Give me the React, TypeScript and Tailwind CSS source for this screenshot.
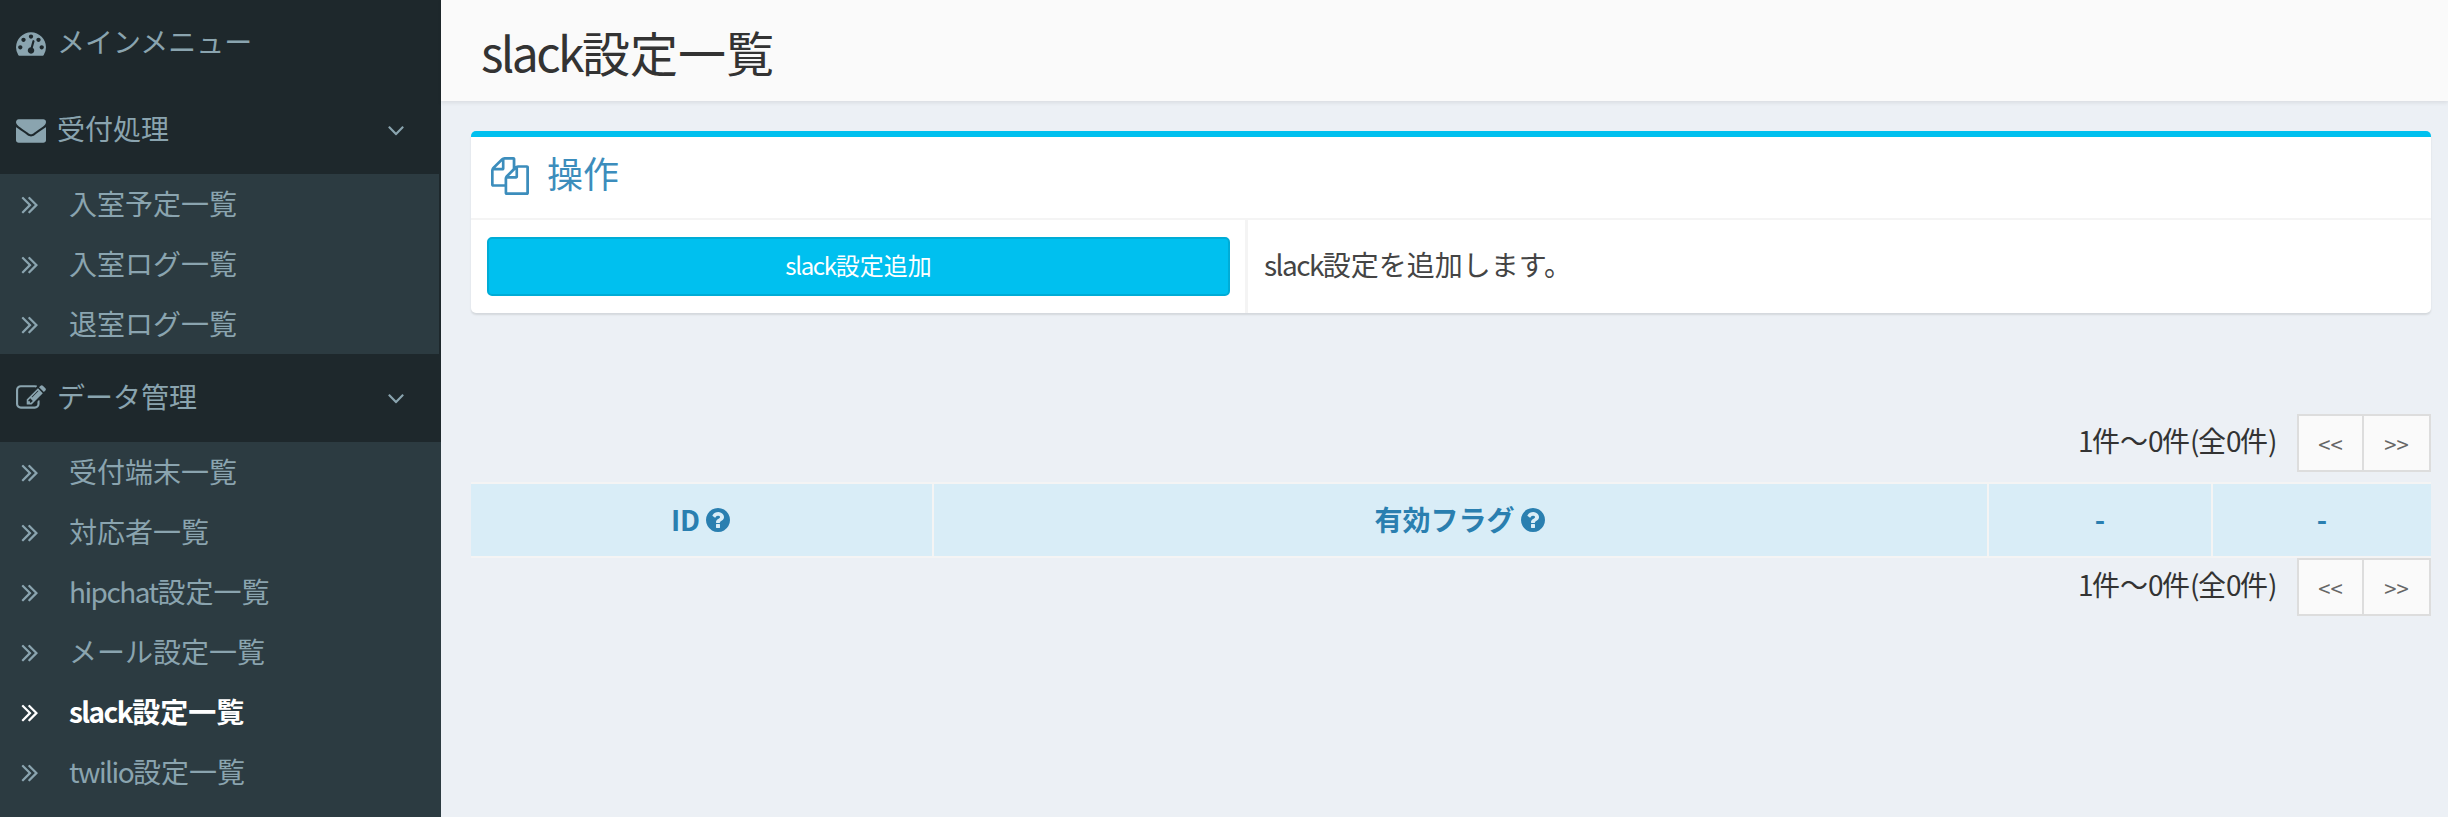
import React from 'react';

const FA = {
  tachometer: "M384 1152q0-53-37.5-90.5t-90.5-37.5-90.5 37.5-37.5 90.5 37.5 90.5 90.5 37.5 90.5-37.5 37.5-90.5zm192-448q0-53-37.5-90.5t-90.5-37.5-90.5 37.5-37.5 90.5 37.5 90.5 90.5 37.5 90.5-37.5 37.5-90.5zm428 481l101-382q6-26-7.5-48.5t-38.5-29.5-48 6.5-30 39.5l-101 382q-60 5-107 43.5t-63 98.5q-20 77 20 146t117 89 146-20 89-117q16-60-6-117t-72-91zm660-33q0-53-37.5-90.5t-90.5-37.5-90.5 37.5-37.5 90.5 37.5 90.5 90.5 37.5 90.5-37.5 37.5-90.5zm-640-640q0-53-37.5-90.5t-90.5-37.5-90.5 37.5-37.5 90.5 37.5 90.5 90.5 37.5 90.5-37.5 37.5-90.5zm448 192q0-53-37.5-90.5t-90.5-37.5-90.5 37.5-37.5 90.5 37.5 90.5 90.5 37.5 90.5-37.5 37.5-90.5zm320 448q0 261-141 483-19 29-54 29h-1402q-35 0-54-29-141-221-141-483 0-182 71-348t191-286 286-191 348-71 348 71 286 191 191 286 71 348z",
  envelope: "M1792 710v794q0 66-47 113t-113 47h-1472q-66 0-113-47t-47-113v-794q44 49 101 87 362 246 497 345 57 42 92.5 65.5t94.5 48 110 24.5h2q51 0 110-24.5t94.5-48 92.5-65.5q170-123 498-345 57-39 100-87zm0-294q0 79-49 151t-122 123q-376 261-468 325-10 7-42.5 30.5t-54 38-52 32.5-57.5 27-50 9h-2q-23 0-50-9t-57.5-27-52-32.5-54-38-42.5-30.5q-91-64-262-182.5t-205-142.5q-62-42-117-115.5t-55-136.5q0-78 41.5-130t118.5-52h1472q65 0 112.5 47t47.5 113z",
  edit: "M888 1184l116-116-152-152-116 116v56h96v96h56zm440-720q-16-16-33 1l-350 350q-17 17-1 33t33-1l350-350q17-17 1-33zm80 594v190q0 119-84.5 203.5t-203.5 84.5h-832q-119 0-203.5-84.5t-84.5-203.5v-832q0-119 84.5-203.5t203.5-84.5h832q63 0 117 25 15 7 18 23 3 17-9 29l-49 49q-14 14-32 8-23-6-45-6h-832q-66 0-113 47t-47 113v832q0 66 47 113t113 47h832q66 0 113-47t47-113v-126q0-13 9-22l64-64q15-15 35-7t20 29zm-96-738l288 288-672 672h-288v-288zm444 132l-92 92-288-288 92-92q28-28 68-28t68 28l152 152q28 28 28 68t-28 68z",
  doubleRight: "M979 960q0 13-10 23l-466 466q-10 10-23 10t-23-10l-50-50q-10-10-10-23t10-23l393-393-393-393q-10-10-10-23t10-23l50-50q10-10 23-10t23 10l466 466q10 10 10 23zm384 0q0 13-10 23l-466 466q-10 10-23 10t-23-10l-50-50q-10-10-10-23t10-23l393-393-393-393q-10-10-10-23t10-23l50-50q10-10 23-10t23 10l466 466q10 10 10 23z",
  angleDown: "M1395 736q0 13-10 23l-466 466q-10 10-23 10t-23-10l-466-466q-10-10-10-23t10-23l50-50q10-10 23-10t23 10l393 393 393-393q10-10 23-10t23 10l50 50q10 10 10 23z",
  question: "M1024 1376v-192q0-14-9-23t-23-9h-192q-14 0-23 9t-9 23v192q0 14 9 23t23 9h192q14 0 23-9t9-23zm256-672q0-88-55.5-163t-138.5-116-170-41q-243 0-371 213-15 24 8 42l132 100q7 6 19 6 16 0 25-12 53-68 86-92 34-24 86-24 48 0 85.5 26t37.5 59q0 38-20 61t-68 45q-63 28-115.5 86.5t-52.5 125.5v36q0 14 9 23t23 9h192q14 0 23-9t9-23q0-19 21.5-49.5t54.5-49.5q32-18 49-28.5t46-35 44.5-48 28-60.5 12.5-81zm384 192q0 209-103 385.5t-279.5 279.5-385.5 103-385.5-103-279.5-279.5-103-385.5 103-385.5 279.5-279.5 385.5-103 385.5 103 279.5 279.5 103 385.5z",
  files: "M1696 384q40 0 68 28t28 68v1216q0 40-28 68t-68 28h-960q-40 0-68-28t-28-68v-288h-544q-40 0-68-28t-28-68v-672q0-40 20-88t48-76l408-408q28-28 76-48t88-20h416q40 0 68 28t28 68v328q68-40 128-40h416zm-544 213l-299 299h299v-299zm-640-384l-299 299h299v-299zm194 647l316-316v-416h-384v416q0 40-28 68t-68 28h-416v640h512v-256q0-40 20-88t48-76zm956 804v-1152h-384v416q0 40-28 68t-68 28h-416v640h896z",
};

function Icon({ d, className }: { d: string; className?: string }) {
  return (
    <svg viewBox="0 0 1792 1792" fill="currentColor" className={className}>
      <path d={d} />
    </svg>
  );
}

// latin letters are a little wider in the CJK font than in the picture
function L({ children }: { children: React.ReactNode }) {
  return <span className="tracking-[-0.055em]">{children}</span>;
}

function MenuHeader({ icon, label, open, h }: { icon: string; label: string; open?: boolean; h: string }) {
  return (
    <div className={`flex items-center pl-[16px] pr-[31px] text-[28px] text-[#8aa4af] ${h}`}>
      <Icon d={icon} className="w-[30px] h-[30px] shrink-0" />
      <span className="ml-[11px] flex-1 pb-[4px]">{label}</span>
      {open && <Icon d={FA.angleDown} className="w-[28px] h-[28px]" />}
    </div>
  );
}

function SubItem({ label, latin, active }: { label: string; latin?: string; active?: boolean }) {
  return (
    <div className={`flex items-center h-[60px] pl-[15px] text-[28px] ${active ? 'text-white font-bold' : 'text-[#8aa4af]'}`}>
      <Icon d={FA.doubleRight} className="w-[30px] h-[30px] shrink-0" />
      <span className="ml-[24px] pb-[3px]">{latin && <L>{latin}</L>}{label}</span>
    </div>
  );
}

function Pager() {
  return (
    <div className="flex items-center justify-end text-[28px] text-[#333]">
      <span className="mr-[21px] pb-[6px]"><L>1</L>件〜<L>0</L>件<L>(</L>全<L>0</L>件<L>)</L></span>
      <div className="flex h-[58px] border-2 border-[#ddd] bg-[#fafafa] text-[22px] text-[#666]">
        <span className="w-[65px] flex items-center justify-center border-r-2 border-[#ddd]">&lt;&lt;</span>
        <span className="w-[65px] flex items-center justify-center">&gt;&gt;</span>
      </div>
    </div>
  );
}

function Th({ w, label, help, last }: { w: string; label: string; help?: boolean; last?: boolean }) {
  return (
    <div className={`flex items-center justify-center gap-[4px] h-full font-bold text-[#2a7fb0] text-[28px] ${w} ${last ? '' : 'border-r-2 border-[#f4f4f4]'}`}>
      <span className="pb-[3px]">{label}</span>
      {help && <Icon d={FA.question} className="w-[28px] h-[28px]" />}
    </div>
  );
}

export default function App() {
  return (
    <div className="flex h-[817px] overflow-hidden bg-[#ecf0f5] font-['Noto_Sans_CJK_JP',sans-serif]">
      <aside className="w-[441px] shrink-0 bg-[#1e282c] flex flex-col">
        <MenuHeader icon={FA.tachometer} label="メインメニュー" h="h-[86px]" />
        <MenuHeader icon={FA.envelope} label="受付処理" open h="h-[88px]" />
        <div className="w-[439px] bg-[#2c3b41]">
          <SubItem label="入室予定一覧" />
          <SubItem label="入室ログ一覧" />
          <SubItem label="退室ログ一覧" />
        </div>
        <MenuHeader icon={FA.edit} label="データ管理" open h="h-[88px]" />
        <div className="flex-1 bg-[#2c3b41]">
          <SubItem label="受付端末一覧" />
          <SubItem label="対応者一覧" />
          <SubItem latin="hipchat" label="設定一覧" />
          <SubItem label="メール設定一覧" />
          <SubItem latin="slack" label="設定一覧" active />
          <SubItem latin="twilio" label="設定一覧" />
        </div>
      </aside>

      <main className="flex-1 min-w-0">
        <header className="h-[101px] bg-[#fafafa] flex items-center pl-[40px] text-[48px] text-[#333] shadow-[0_2px_4px_rgba(0,0,0,0.08)]">
          <span><L>slack</L>設定一覧</span>
        </header>

        <div className="pl-[30px] pr-[17px] pt-[30px]">
          <section className="bg-white rounded-[5px] border-t-[6px] border-[#00c0ef] shadow-[0_2px_2px_rgba(0,0,0,0.1)]">
            <div className="h-[83px] flex items-center pl-[20px] text-[36px] text-[#3c8dbc] border-b-2 border-[#f4f4f4]">
              <Icon d={FA.files} className="w-[38px] h-[38px] mb-[4px]" />
              <span className="ml-[18px] pb-[12px]">操作</span>
            </div>
            <div className="flex h-[93px]">
              <div className="w-[777px] pl-[16px] pr-[15px] flex items-center border-r-[3px] border-[#f4f4f4]">
                <button className="w-full h-[59px] pb-[4px] rounded-[5px] bg-[#00c0ef] border-2 border-[#00acd6] text-white text-[24px]">
                  <L>slack</L>設定追加
                </button>
              </div>
              <div className="pl-[16px] pb-[5px] flex items-center text-[28px] text-[#444]"><span><L>slack</L>設定を追加します。</span></div>
            </div>
          </section>

          <div className="mt-[101px]">
            <Pager />
          </div>
          <div className="mt-[10px] h-[76px] border-y-2 border-[#f4f4f4] bg-[#d9edf7] flex items-center">
            <Th w="w-[463px]" label="ID" help />
            <Th w="w-[1055px]" label="有効フラグ" help />
            <Th w="w-[224px]" label="-" />
            <Th w="flex-1" label="-" last />
          </div>
          <Pager />
        </div>
      </main>
    </div>
  );
}
